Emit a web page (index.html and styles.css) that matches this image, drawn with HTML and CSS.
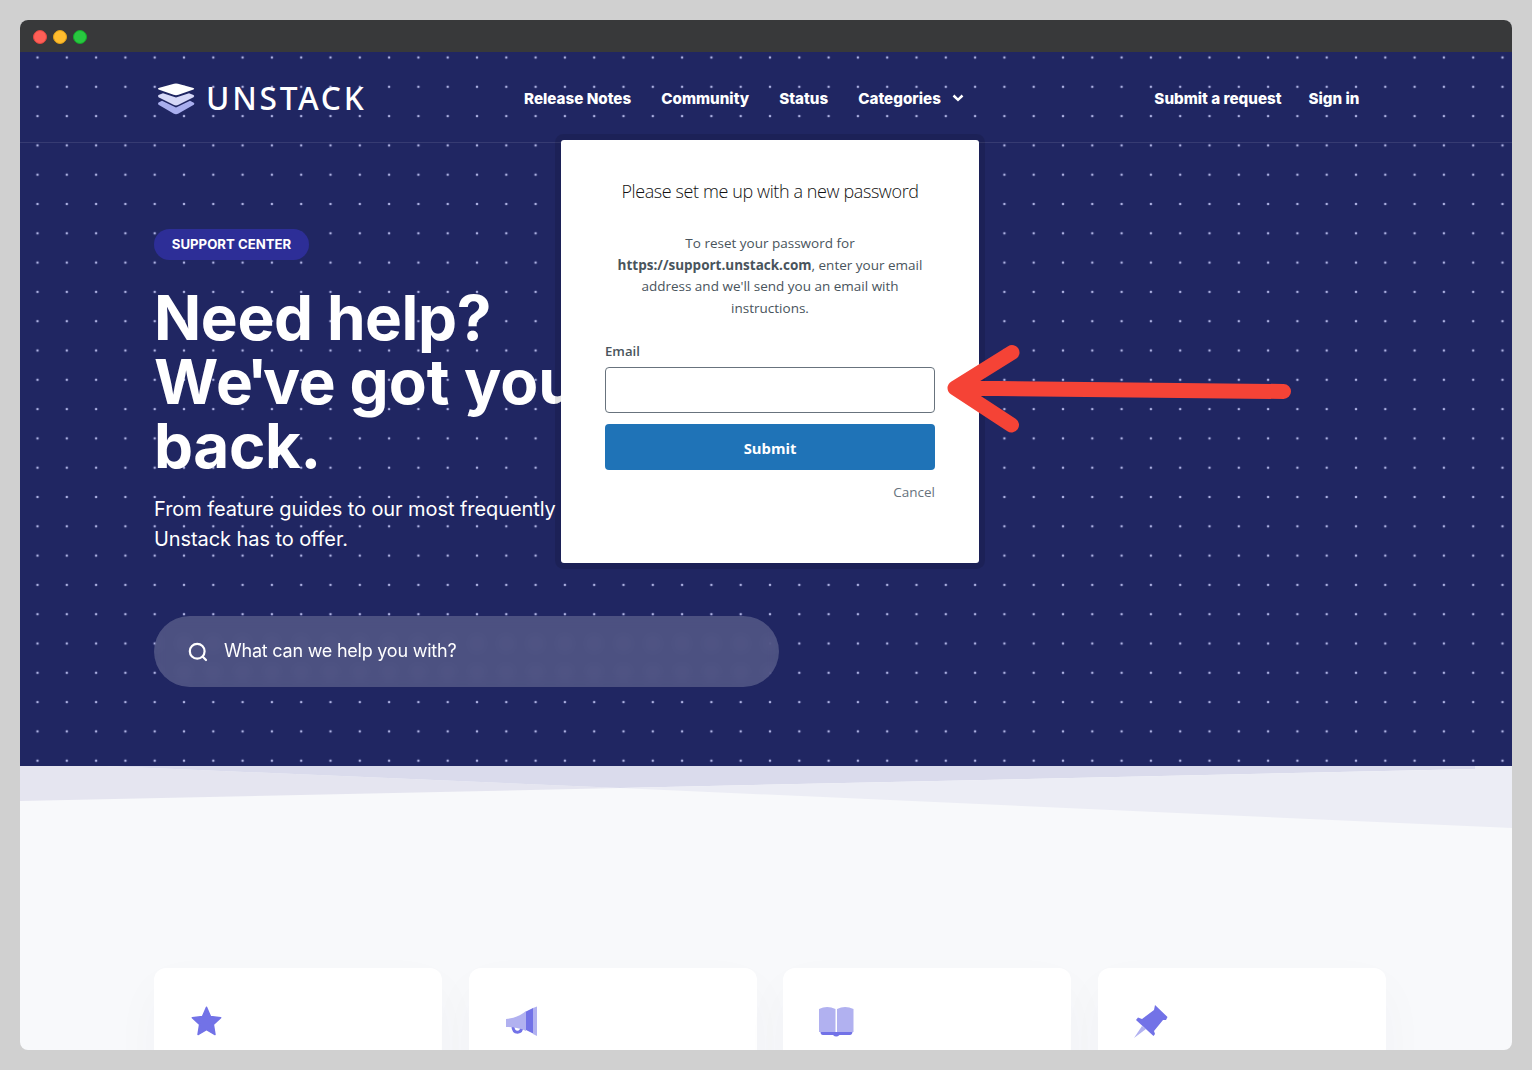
FILE: index.html
```html
<!DOCTYPE html>
<html lang="en">
<head>
<meta charset="utf-8">
<title>Unstack Support Center</title>
<link rel="stylesheet" href="styles.css">
</head>
<body>
<div class="window">
  <div class="titlebar"><span class="light red"></span><span class="light yellow"></span><span class="light green"></span></div>
  <section class="hero">
    <svg class="dots" width="1492" height="714" aria-hidden="true">
      <defs><pattern id="dot" width="29.3" height="29.3" patternUnits="userSpaceOnUse" x="2.85" y="-9.15"><circle cx="14.65" cy="14.65" r="1.3" fill="#adb1e2"/></pattern></defs>
      <rect width="1492" height="714" fill="url(#dot)"/>
    </svg>
    <header class="header">
      <a class="logo">
        <svg width="212" height="40" viewBox="0 0 212 40">
          <path d="M1.500 21.500L5 19.800L19 26.500L33 19.800L36.800 21.800Q38 22.700 36.800 23.700L21.500 32.500Q19 33.800 16.500 32.500L1.500 23.700Q0.500 22.700 1.500 21.500Z" fill="#a9aeee"/>
          <path d="M1.500 14L6 12.300L19 16.500L32 12.300L36.500 14Q38 15 36.500 16.200L21.500 23.800Q19 25 16.500 23.800L1.500 16.200Q0.500 15 1.500 14Z" fill="#d6d8f7"/>
          <path d="M1.500 7L17 2.700Q19 2.200 21 2.700L36.500 7Q38 7.800 36.500 8.600L21.500 13.700Q19 14.600 16.500 13.700L1.500 8.600Q0.500 7.800 1.500 7Z" fill="#fff"/>
          <text class="logo-text" x="49" y="28.500" textLength="160.500" lengthAdjust="spacingAndGlyphs">UNSTACK</text>
        </svg>
      </a>
      <nav class="nav">
        <a>Release Notes</a><a>Community</a><a>Status</a>
        <a class="categories">Categories<svg width="12" height="8" viewBox="0 0 12 8"><path d="M1.500 1.500L6 5.800L10.500 1.500" fill="none" stroke="#fff" stroke-width="2.500"/></svg></a>
      </nav>
      <nav class="account"><a>Submit a request</a><a>Sign in</a></nav>
    </header>
    <div class="intro">
      <span class="badge">SUPPORT CENTER</span>
      <h1>Need help?<br><span class="kern-w">W</span><span class="tight">e'</span>ve <span class="loose">got your</span><br>back.</h1>
      <p>From feature guides to our most frequently<br>Unstack has to offer.</p>
      <div class="search">
        <svg width="20" height="20" viewBox="0 0 20 20" fill="none" stroke="#fff" stroke-width="2.200" stroke-linecap="round"><circle cx="9.200" cy="9.200" r="7.400"/><path d="M14.800 14.800L18 18"/></svg>
        <span>What can we help you with?</span>
      </div>
    </div>
  </section>
  <svg class="slopes" width="1492" height="64" viewBox="0 0 1492 64">
    <path d="M0 0H85L600 22L0 35Z" fill="#e5e5f0"/>
    <path d="M85 0H1455V3L600 22Z" fill="#dadbec"/>
    <path d="M600 22L1455 3V0H1492V62Z" fill="#ecedf5"/>
  </svg>
  <main class="cards">
    <article class="card"><svg width="32" height="32" viewBox="0 0 32 32"><path d="M16.500 2.300L20.500 11.500L30.700 12.700L23.400 19.500L25 29.500L16.500 24.700L8 29.500L9.600 19.500L2.300 12.700L12.500 11.500Z" fill="#7272e7" stroke="#7272e7" stroke-width="1.500" stroke-linejoin="round"/></svg></article>
    <article class="card"><svg width="32" height="32" viewBox="0 0 32 32"><path d="M7.800 20Q8 27.300 12.500 27.300Q17 26.800 17 21" fill="none" stroke="#7272e7" stroke-width="3"/><path d="M1 14Q13 13 21 6V26Q13 22 1 22Z" fill="#b1b1f0"/><path d="M21 6.500L28 3V28.500L21 25Z" fill="#7272e7"/><path d="M28 3L32 1.500V31L28 29Z" fill="#b1b1f0"/></svg></article>
    <article class="card"><svg width="36" height="32" viewBox="0 0 36 32"><path d="M0 4Q8 0 16.500 4V27H0ZM18 4Q26 0 34.500 4V27H18Z" fill="#b1b1f0"/><path d="M1.500 27H33.500Q33 30 31 30H20.500Q17.200 33 14 30H4Q1.500 30 1.500 27Z" fill="#7272e7"/></svg></article>
    <article class="card"><svg width="34" height="34" viewBox="0 0 34 34"><path d="M0 33L8 21L12 24Z" fill="#b1b1f0"/><path d="M21 0L33.500 12L32 15L29 15L20 26L21 29L19.500 31L2 15L4 12.500L8 14L20 5Z" fill="#7272e7"/></svg></article>
  </main>
  <div class="modal" role="dialog">
    <h2>Please set me up with a new password</h2>
    <p>To reset your password for<br><b>https://support.unstack.com</b>, enter your email<br>address and we'll send you an email with<br>instructions.</p>
    <label for="email">Email</label>
    <input id="email" type="email">
    <button>Submit</button>
    <a class="cancel">Cancel</a>
  </div>
  <svg class="arrow" width="360" height="110" viewBox="935 335 360 110" fill="none" stroke="#f54336" stroke-width="15" stroke-linecap="round" stroke-linejoin="round"><path d="M955 388L1283.500 391.500M1012 352.500L955 388L1011.500 425"/></svg>
</div>
</body>
</html>
```
FILE: styles.css
```css
* { box-sizing: border-box; }
body { margin: 0; padding: 20px; height: 1070px; background: #d0d0d0; font-family: Inter, sans-serif; overflow: hidden; }
.window { position: relative; height: 1030px; border-radius: 8px; overflow: hidden; background: #f8f9fb; }
.titlebar { display: flex; align-items: center; gap: 6px; height: 32px; padding: 2px 13px 0; background: #38393a; }
.light { width: 14px; height: 14px; border-radius: 50%; border: 1px solid; }
.red { background: #ff5f57; border-color: #e2463f; }
.yellow { background: #ffbd2e; border-color: #e1a116; }
.green { background: #28c840; border-color: #12ac28; }
.hero { position: relative; height: 714px; background: #202662; color: #fff; }
.dots { position: absolute; inset: 0; }
.header { position: relative; display: flex; align-items: center; height: 91px; padding: 2px 152.500px 0 137px; border-bottom: 1px solid #363b72; font-size: 15.200px; font-weight: 800; white-space: nowrap; }
.logo { width: 367px; height: 40px; margin-top: 6px; }
.logo svg { display: block; overflow: visible; }
.logo-text { font: 500 32px "Noto Sans", sans-serif; letter-spacing: 2.800px; fill: #fff; }
.nav { display: flex; gap: 30px; }
.categories svg { margin-left: 11px; vertical-align: 2px; }
.account { display: flex; gap: 27px; margin-left: auto; }
.intro { position: relative; padding: 86px 0 0 134px; white-space: nowrap; }
.badge { display: flex; align-items: center; justify-content: center; width: 155px; height: 31px; padding-bottom: 1px; border-radius: 16px; background: #2d2e97; font-size: 13.200px; font-weight: 700; }
h1 { margin: 26px 0 0; font-size: 62px; line-height: 64px; font-weight: 700; letter-spacing: -.4px; }
.kern-w { letter-spacing: -2.400px; }
.tight { letter-spacing: -4.800px; }
.loose { letter-spacing: 0; }
.intro p { margin: 16px 0 0; font-size: 20px; line-height: 30px; letter-spacing: -.08px; }
.search { display: flex; align-items: center; gap: 16px; width: 625px; height: 71px; margin-top: 62px; padding-left: 34px; border-radius: 36px; background: rgba(255, 255, 255, .2); backdrop-filter: blur(6px); font-size: 18px; letter-spacing: -.23px; }
.search span { padding-bottom: 2px; }
.slopes { display: block; }
.cards { display: grid; grid-template-columns: repeat(4, 288px); justify-content: space-between; padding: 138px 126px 0 134px; }
.card { height: 250px; padding: 37px 36px; border-radius: 12px; background: #fff; box-shadow: 0 20px 50px rgba(30, 40, 90, .03); }
.modal { position: absolute; left: 541px; top: 120px; display: flex; flex-direction: column; width: 418px; height: 423px; padding: 37px 44px 0; border-radius: 3px; background: #fff; box-shadow: 0 0 0 6px rgba(0, 0, 0, .11); font-family: "Open Sans", sans-serif; color: #49545c; }
.modal h2 { margin: 0; font-size: 18px; line-height: 28px; font-weight: 300; letter-spacing: -.4px; text-align: center; color: #111; white-space: nowrap; }
.modal p { margin: 28px 0 0; font-size: 13.500px; line-height: 21.600px; text-align: center; white-space: nowrap; }
.modal label { margin-top: 22px; font-size: 13.200px; line-height: 20px; font-weight: 600; }
.modal input { height: 46px; margin: 6px 0 11px; border: 1px solid #68737d; border-radius: 4px; }
.modal button { height: 46px; padding-top: 3px; border: 0; border-radius: 4px; background: #1f73b7; color: #fff; font: 700 14.800px "Open Sans", sans-serif; }
.cancel { align-self: flex-end; margin-top: 12px; font-size: 13.500px; line-height: 20px; color: #68737d; }
.arrow { position: absolute; left: 915px; top: 315px; }
```
